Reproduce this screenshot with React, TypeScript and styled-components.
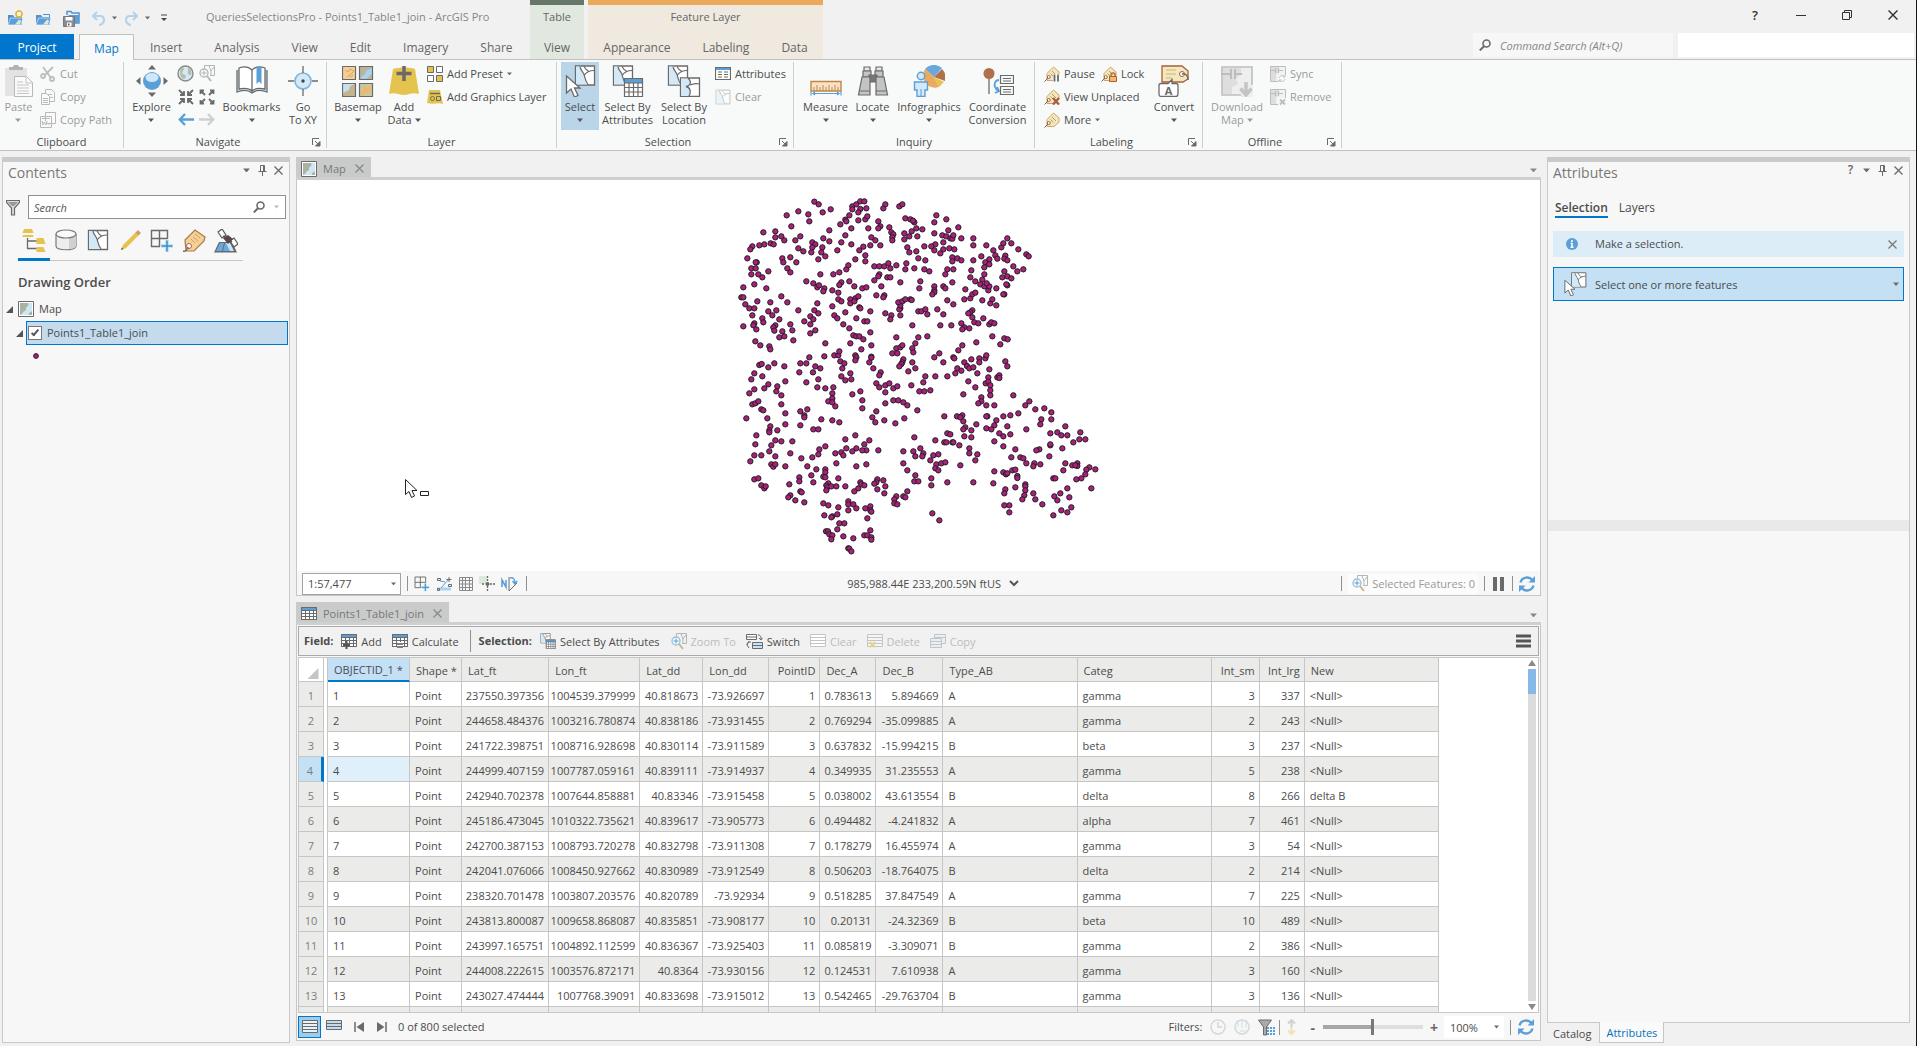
import React from 'react';
import styled, { createGlobalStyle, css } from 'styled-components';

const blue = '#0077c8';
const line = '#c6c6c6';
const ink = '#4c4c4c';
const muted = '#9b9b9b';

const Global = createGlobalStyle`
  *, *::before, *::after { box-sizing: border-box; }
  body { margin: 0; background: #f1f1f1; }
  body, button, input, select { font-family: "Open Sans", "Noto Sans", sans-serif; font-size: 11px; color: ${ink}; }
  button { border: 0; padding: 0; background: none; margin: 0; }
  svg { display: block; flex: none; }
`;

/* ---------- shell ---------- */

const Shell = styled.div`
  display: flex; flex-direction: column; height: 100vh; overflow: hidden;
  border-right: 1px solid #14141f; line-height: 14px;
`;
const Header = styled.header`display: flex; height: 59px; flex: none;`;
const HeaderLeft = styled.div`width: 530px; flex: none; display: flex; flex-direction: column;`;
const TitleRow = styled.div`height: 34px; flex: none; display: flex; align-items: center;`;
const QuickAccess = styled.div`display: flex; align-items: center; gap: 8px; padding-left: 7px; width: 206px; padding-top: 2px;`;
const QuickButton = styled.button<{ $w?: number }>`width: ${p => p.$w ?? 20}px; height: 20px; display: flex; align-items: center; gap: 6px;`;
const AppTitle = styled.h1`margin: 0; font-size: 11px; font-weight: 400; color: #868686; white-space: nowrap;`;
const TabRow = styled.nav`display: flex; height: 25px; align-items: stretch;`;
const RibbonTab = styled.button<{ $kind?: 'project' | 'active' }>`
  font-size: 12px; padding: 2px 16px 0; color: #666;
  ${p => p.$kind === 'project' && css`background: #0077cc; color: #fff; width: 74px; margin-right: 5px; padding: 2px 0 0;`}
  ${p => p.$kind === 'active' && css`
    background: #f8faf9; color: #0077cc; width: 55px; padding: 1px 0 0; margin-bottom: -1px;
    border: 1px solid #c0c0c0; border-bottom: 0; position: relative; z-index: 1;`}
`;
const ContextGroup = styled.div<{ $w: number; $bar: string; $bg: string }>`
  width: ${p => p.$w}px; flex: none; background: ${p => p.$bg}; border-top: 5px solid ${p => p.$bar};
  display: flex; flex-direction: column; justify-content: space-between; margin-right: 4px;
  & > span { text-align: center; color: #666; font-size: 11px; line-height: 24px; }
`;
const ContextTabs = styled(TabRow)`justify-content: center;`;
const HeaderRight = styled.div`flex: 1; display: flex; flex-direction: column; align-items: flex-end;`;
const WindowControls = styled.div`height: 33px; display: flex; padding-bottom: 3px;`;
const WindowButton = styled.button`width: 46px; display: grid; place-items: center; color: #333; font-weight: 600; font-size: 13px;`;
const CommandRow = styled.div`display: flex; gap: 5px; height: 24px; padding-right: 2px;`;
const CommandSearch = styled.label`width: 200px; background: #f7f7f7; display: flex; align-items: center; gap: 9px; padding-left: 6px;
  input { border: 0; background: none; padding: 0; width: 160px; font-style: italic; outline: 0; }
  input::placeholder { color: #868686; opacity: 1; }
`;
const UserBox = styled.div`width: 236px; background: #fff;`;

/* ---------- ribbon ---------- */

const Ribbon = styled.div`
  height: 92px; flex: none; display: flex; background: #f8faf9;
  border-top: 1px solid #c0c0c0; border-bottom: 1px solid #c0c0c0; padding: 2px 0;
`;
const Group = styled.section<{ $w: number; $pad?: number }>`
  width: ${p => p.$w}px; flex: none; border-right: 1px solid #cfcfcf; display: flex; flex-direction: column;
`;
const GroupBody = styled.div<{ $pad: number }>`height: 72px; flex: none; display: flex; padding-left: ${p => p.$pad}px;`;
const GroupFoot = styled.div`height: 16px; flex: none; display: flex; align-items: center;
  & > span { flex: 1; text-align: center; }
  & > button { margin-right: 5px; }
`;
const LargeButton = styled.button<{ $w: number; $active?: boolean; $off?: boolean }>`
  width: ${p => p.$w}px; height: 68px; flex: none; display: flex; flex-direction: column; align-items: center;
  padding-top: 3px; gap: 3px; line-height: 13px; white-space: nowrap;
  background: ${p => (p.$active ? '#bad4e8' : 'none')}; color: ${p => (p.$off ? muted : ink)};
`;
const LargeText = styled.span`display: flex; flex-direction: column; align-items: center;
  & > span { display: flex; align-items: center; gap: 3px; height: 13px; }
`;
const Stack = styled.div<{ $w?: number }>`display: flex; flex-direction: column; width: ${p => (p.$w ? p.$w + 'px' : 'auto')}; padding-left: 3px;`;
const SmallRow = styled.div`display: flex; gap: 6px;`;
const SmallButton = styled.button<{ $off?: boolean }>`
  height: 23px; display: flex; align-items: center; gap: 4px; white-space: nowrap; color: ${p => (p.$off ? muted : ink)};
`;
const NavGrid = styled.div`display: grid; grid-template-columns: 21px 21px; grid-auto-rows: 23px; width: 43px;
  button { display: grid; place-items: center; }
`;

/* ---------- panes ---------- */

const Main = styled.main`flex: 1; min-height: 0; display: flex; padding: 6px 6px 3px 2px;`;
const Pane = styled.section`background: #f7f7f7; border: 1px solid #c9c9c9; border-top: 5px solid #cacaca; display: flex; flex-direction: column; min-height: 0;`;
const ContentsPane = styled(Pane)`width: 288px; flex: none;`;
const PaneHeader = styled.div`height: 23px; flex: none; display: flex; align-items: flex-start; justify-content: space-between; padding: 1px 5px 0 5px;
  h2 { margin: 0; font-size: 14px; line-height: 19px; font-weight: 400; color: #777; }
`;
const PaneTools = styled.div`display: flex; align-items: center; gap: 5px;
  button { display: grid; place-items: center; width: 11px; height: 14px; font-size: 12px; line-height: 14px; font-weight: 600; color: #666; }
`;
const SearchRow = styled.div`display: flex; align-items: center; gap: 8px; padding: 10px 3px 0 3px;`;
const SearchBox = styled.label`flex: 1; height: 24px; border: 1px solid #919191; background: #fff; display: flex; align-items: center; gap: 9px; padding: 0 6px 0 5px;
  input { flex: 1; min-width: 0; border: 0; padding: 0; outline: 0; font-style: italic; }
  input::placeholder { color: #555; opacity: 1; }
`;
const ListTabs = styled.div`display: flex; margin: 8px 0 0 15px; width: 225px; border-bottom: 1px solid #c9c9c9; height: 34px;`;
const ListTab = styled.button<{ $active?: boolean }>`width: 32px; height: 34px; display: flex; justify-content: center; padding-top: 2px;
  border-bottom: 3px solid ${p => (p.$active ? blue : 'transparent')};
`;
const OrderTitle = styled.h3`margin: 12px 0 6px 15px; font-size: 13px; line-height: 18px; font-weight: 600;`;
const TreeRow = styled.div`height: 24px; display: flex; align-items: center; padding-left: 3px; gap: 5px;`;
const LayerRow = styled(TreeRow)`padding-left: 13px; gap: 3px;`;
const LayerItem = styled.label`flex: 1; height: 24px; background: #c3dbed; border: 1px solid ${blue}; display: flex; align-items: center; gap: 5px; padding-left: 1px; margin-right: 1px;`;
const Check = styled.input`appearance: none; margin: 0; width: 14px; height: 14px; background: #fff; border: 1px solid #777; display: grid; place-items: center;
  &:checked::after { content: ""; width: 4px; height: 8px; border: solid #555; border-width: 0 2px 2px 0; transform: rotate(40deg); margin-bottom: 2px; }
`;
const SymbolRow = styled.div`height: 22px; padding: 8px 0 0 30px;`;

const Center = styled.div`flex: 1; min-width: 0; margin: 0 6px 2px; display: flex; flex-direction: column;`;
const DocTabs = styled.div`height: 23px; flex: none; display: flex; justify-content: space-between; align-items: flex-end; border-bottom: 3px solid #cfcfcf; padding-right: 4px;
  & > svg { margin-bottom: 5px; }
`;
const DocTab = styled.div<{ $w: number }>`width: ${p => p.$w}px; height: 20px; background: #c9cbca; display: flex; align-items: center; gap: 6px; padding: 3px 7px 0 5px; color: #777;
  span { flex: 1; white-space: nowrap; }
`;
const MapView = styled.div`flex: 1; min-height: 0; background: #fff; border-left: 1px solid ${line}; border-right: 1px solid ${line}; display: flex; justify-content: center; position: relative; overflow: hidden;`;
const Pointer = styled.svg`position: absolute; left: 108px; top: 299px;`;
const MapBar = styled.div`height: 25px; flex: none; display: flex; align-items: center; justify-content: space-between; padding: 1px 5px 0 5px;
  background: #f7f7f7; border: 1px solid ${line}; border-top: 0;`;
const Cluster = styled.div<{ $gap?: number; $end?: number }>`display: flex; align-items: center; gap: ${p => p.$gap ?? 6}px; margin-right: ${p => p.$end ?? 0}px; white-space: nowrap;
  button { display: flex; align-items: center; gap: 4px; }
`;
const Rule = styled.i<{ $h?: number; $start?: number }>`width: 1px; height: ${p => p.$h ?? 15}px; margin-left: ${p => p.$start ?? 0}px; background: #8f8f94; flex: none;`;
const ScaleBox = styled.label`width: 99px; height: 22px; border: 1px solid #a3a3a3; background: #fff; display: flex; align-items: center; padding: 0 4px 0 5px;
  select { appearance: none; border: 0; background: none; padding: 0; flex: 1; min-width: 0; outline: 0; }
`;
const SelectedBox = styled.button`height: 20px; background: #fcfcfc; color: #999; padding: 0 3px;`;

const TablePane = styled.section`height: 439px; flex: none; margin-top: 6px; display: flex; flex-direction: column;`;
const TableBody = styled.div`flex: 1; min-height: 0; border: 1px solid ${line}; border-top: 0; padding: 1px 1px 0; display: flex; flex-direction: column; background: #f7f7f7;`;
const Toolbar = styled.div`height: 30px; flex: none; border: 1px solid #a9a9ad; background: #f1f1f1; display: flex; align-items: center; padding: 0 7px 0 5px;
  b { font-weight: 700; }
`;
const ToolButton = styled.button<{ $off?: boolean }>`display: flex; align-items: center; gap: 4px; margin-left: 10px; white-space: nowrap; color: ${p => (p.$off ? '#b9bdbd' : ink)};
  b + &, i + & { margin-left: 8px; }
`;
const Spring = styled.span`flex: 1;`;
const GridFrame = styled.div`flex: 1; min-height: 0; margin-top: 1px; border: 1px solid ${line}; background: #fff; display: flex; justify-content: space-between; overflow: hidden;`;
const Grid = styled.table`table-layout: fixed; border-collapse: separate; border-spacing: 0; width: 1140px; flex: none; align-self: flex-start;`;
const Col = styled.col<{ $w: number }>`width: ${p => p.$w}px;`;
const Head = styled.th<{ $selected?: boolean; $right?: boolean }>`
  height: 24px; padding: 2px 4px 0 6px; font-weight: 400; white-space: nowrap; background: #ebebe9;
  text-align: ${p => (p.$right ? 'right' : 'left')};
  border-right: 1px solid ${line}; border-bottom: 1px solid ${line};
  ${p => p.$selected && css`background: #c3e0f4; border-bottom: 2px solid ${blue}; color: #4c4c5c;`}
`;
const Corner = styled(Head)`background: #fff; padding: 0 1px 0 8px; svg { margin-top: 6px; }`;
const Cell = styled.td<{ $right?: boolean; $even?: boolean; $current?: boolean }>`
  height: 25px; padding: ${p => (p.$right ? '3px 4px 0 0' : '3px 0 0 5px')}; white-space: nowrap;
  text-align: ${p => (p.$right ? 'right' : 'left')};
  background: ${p => (p.$current ? '#dff0fa' : p.$even ? '#ebebe9' : '#fff')};
  border-right: 1px solid ${line}; border-bottom: 1px solid ${line};
`;
const RowNumber = styled.th<{ $current?: boolean }>`
  height: 25px; padding: 3px 0 0; font-weight: 400; color: #7d7d7d; background: ${p => (p.$current ? '#c3e0f4' : '#ebebe9')};
  border-right: ${p => (p.$current ? `3px solid ${blue}` : `1px solid ${line}`)}; border-bottom: 1px solid ${line};
`;
const Gap = styled.td`padding: 0; background: #fff; border-right: 1px solid ${line};`;
const Scroller = styled.div`width: 10px; flex: none; display: flex; flex-direction: column; align-items: center; padding: 2px 0 2px; margin-right: 1px; gap: 2px;`;
const Track = styled.div`flex: 1; width: 8px; background: #dcdcdc;`;
const Thumb = styled.div`height: 25px; background: #86b9e8;`;
const StatusBar = styled.div`height: 27px; flex: none; display: flex; align-items: center; padding-right: 5px; padding-top: 1px;`;
const ViewButton = styled.button<{ $active?: boolean }>`width: ${p => (p.$active ? 23 : 18)}px; height: 22px; display: grid; place-items: center;
  ${p => (p.$active ? css`background: #9fcbed; border: 1px solid ${blue};` : css`margin-left: 4px;`)}
`;
const StatusButton = styled.button`margin-left: 11px;`;
const Slider = styled.input`appearance: none; width: 100px; height: 12px; margin: 0 7px 0 8px; background: linear-gradient(90deg, #a6a6a6 50%, #dedede 50%) center / 100% 4px no-repeat;
  &::-webkit-slider-thumb { appearance: none; width: 3px; height: 16px; background: #777; }
`;
const ZoomPick = styled.label`width: 60px; height: 22px; background: #fff; display: flex; align-items: center; padding: 0 5px 0 6px; margin: 0 6px;
  select { appearance: none; border: 0; background: none; padding: 0; flex: 1; min-width: 0; outline: 0; }
`;
const Symbol = styled.button`font-size: 14px; font-weight: 700; color: #666;`;

const RightColumn = styled.div`width: 363px; flex: none; display: flex; flex-direction: column;`;
const AttributesPane = styled(Pane)`flex: 1;`;
const AttrTabs = styled.div`display: flex; gap: 11px; padding: 14px 0 0 7px;`;
const AttrTab = styled.button<{ $active?: boolean }>`height: 19px; padding-bottom: 2px; font-size: 12px; font-weight: ${p => (p.$active ? 600 : 400)};
  border-bottom: 2px solid ${p => (p.$active ? blue : 'transparent')};`;
const Message = styled.div`height: 26px; margin: 13px 5px 0; background: #dcedf8; display: flex; align-items: center; padding: 0 7px 0 13px; gap: 17px;
  span { flex: 1; }
`;
const SelectButton = styled.button`height: 34px; margin: 10px 5px 0; border: 1px solid ${blue}; background: #c3e0f4; display: flex; align-items: center; padding: 0 4px 0 9px; gap: 8px;
  span { flex: 1; text-align: left; }
`;
const Splitter = styled.div`height: 11px; background: #e9e9e9; margin-top: 219px;`;
const DockTabs = styled.div`height: 20px; display: flex; flex: none; padding-left: 6px; gap: 8px;`;
const DockTab = styled.button<{ $active?: boolean }>`
  padding-top: 1px;
  ${p => p.$active && css`color: #0072bc; background: #fafafa; border: 1px solid ${line}; border-top: 0; margin-top: -1px; padding: 1px 6px 0;`}
`;

/* ---------- icons ---------- */

const g = '#6a6a6a';
const sky = '#5b9fd9';
const pale = '#d3e9f7';
const gold = '#e5c34f';

const Caret = ({ c = g, w = 6 }: { c?: string; w?: number }) => (
  <svg width={w} height={w / 2 + 1} viewBox="0 0 6 4"><path d="M0 .5h6L3 4z" fill={c} /></svg>
);
const Close = ({ s = 9, c = g }: { s?: number; c?: string }) => (
  <svg width={s} height={s} viewBox="0 0 9 9"><path d="M.5.5l8 8M8.500.5l-8 8" stroke={c} strokeWidth="1.300" /></svg>
);
const Pin = () => <svg width="9" height="11" viewBox="0 0 9 11" fill="none" stroke={g}><path d="M2.500 6V.5h4V6M5.500 1v5M.5 6.500h8M4.500 7v4" /></svg>;
const Lens = ({ c = g }: { c?: string }) => (
  <svg width="12" height="12" viewBox="0 0 12 12" fill="none" stroke={c}><circle cx="7.500" cy="4.500" r="3.500" strokeWidth="1.600" /><path d="M5 7.200L.8 11.400" strokeWidth="2" /></svg>
);
const Launcher = () => <svg width="9" height="9" viewBox="0 0 9 9"><path d="M.5 7V.5H7" fill="none" stroke={g} /><path d="M3 3l4 4M8 3.500V8H3.500z" stroke={g} fill={g} /></svg>;
const FolderIcon = ({ children }: { children?: React.ReactNode }) => (
  <svg width="17" height="17" viewBox="0 0 17 17">
    <path d="M1 15V5h5l1.500 2H15v8z" fill="#4f93cf" /><path d="M1 15l2.500-7H16l-2 7z" fill="#5b9fd9" stroke="#fff" strokeWidth=".6" />
    <path d="M8 14.500l4-5 2 1-1 4z" fill="#dfe7dc" />{children}
  </svg>
);
const NewIcon = () => <FolderIcon><circle cx="12" cy="4" r="3" fill="#fff7d0" stroke="#e0b440" strokeWidth="1.500" /><path d="M12 0v8M8 4h8" stroke="#e0b440" strokeDasharray="1.500 5" /></FolderIcon>;
const OpenIcon = () => <FolderIcon><path d="M8 4.500h6.500V8" fill="none" stroke="#4f93cf" /></FolderIcon>;
const SaveIcon = () => (
  <svg width="17" height="17" viewBox="0 0 17 17"><path d="M4 5V1.500h4l1 1.500h7v10h-5" fill="none" stroke="#4f93cf" strokeWidth="1.500" /><path d="M5 5h11v8h-5z" fill="#5b9fd9" />
    <path d="M.5 6.500h11v10H.5z" fill="#8a8a92" stroke="#77777f" /><path d="M2.500 7h7v3.500h-7zM4 12.500h4.500v4H4z" fill="#fff" /><path d="M5 13.500h1.500v2H5z" fill="#555" /></svg>
);
const Undo = ({ flip }: { flip?: boolean }) => (
  <svg width="15" height="15" viewBox="0 0 15 15" fill="none" stroke="#b5d2ea" strokeWidth="2.200">
    <g transform={flip ? 'matrix(-1 0 0 1 15 0)' : undefined}><path d="M6 1L2 5l4 4M2 5h7c3 0 4 2 4 4s-2 5-5 5" /></g>
  </svg>
);
const PasteIcon = () => (
  <svg width="30" height="32" viewBox="0 0 30 32"><path d="M1 3h22v28H1z" fill="#e3e3e3" /><path d="M5 5V2h4c0-3 6-3 6 0h4v3z" fill="#b3b3b3" />
    <path d="M10.500 11.500h12l6 6v14h-18z" fill="#fafafa" stroke="#b9b9b9" /><path d="M22 12v6h6M13 20h12M13 23h12M13 26h12M13 28.500h12M13 17h6" fill="none" stroke="#c5c5c5" /></svg>
);
const CutIcon = () => <svg width="16" height="16" viewBox="0 0 16 16" fill="none" stroke="#bdbdbd" strokeWidth="1.800"><path d="M3 1l8 11M13 1L5 9" /><circle cx="3" cy="10" r="2" /><circle cx="12" cy="13" r="2" /></svg>;
const CopyIcon = ({ c = '#b9b9b9', f = '#fafafa' }: { c?: string; f?: string }) => (
  <svg width="16" height="16" viewBox="0 0 16 16" fill={f} stroke={c}><path d="M5.500.5h6l3 3v9h-9z" /><path d="M1.500 4.500h5l3 3v8h-8z" /><path d="M3 9.500h5M3 11.500h5M3 13.500h5M8 5.500h4M10 8.500h3" /></svg>
);
const CopyPathIcon = () => <svg width="16" height="16" viewBox="0 0 16 16" fill="#fafafa" stroke="#b9b9b9"><path d="M5.500.5h10v11h-10zM.5 4.500h11v11H.5z" /><path d="M2 9l1 4 1.500-3L6 13l1-4M8.500 13h1M2 6.500h8" /></svg>;
const ExploreIcon = () => (
  <svg width="32" height="32" viewBox="0 0 32 32"><circle cx="16" cy="16" r="9" fill={sky} /><ellipse cx="16" cy="12.500" rx="6.500" ry="4.500" fill="#cfe7f8" />
    <path d="M12 4.500L16 0l4 4.500zM12 27.500l4 4.500 4-4.500zM4.500 12L0 16l4.500 4zM27.500 12l4.500 4-4.500 4z" fill={g} /></svg>
);
const GlobeIcon = () => <svg width="17" height="17" viewBox="0 0 17 17"><circle cx="8.500" cy="8.500" r="7.500" fill={pale} stroke="#888" strokeWidth="1.400" /><path d="M4 3c3-1 4 1 2 3s0 3 2 4 0 4-1 4C3 13 2 7 4 3zM11 3c3 1 4 4 3 7-2 1-4-2-3-4z" fill="#b8bda4" /></svg>;
const ZoomSelIcon = ({ off }: { off?: boolean }) => (
  <svg width="17" height="17" viewBox="0 0 17 17" fill="none" stroke="#b5b5b5"><path d="M6.500 3V.5h10v10H12M11 1l2 5 3-4M13 6v4" /><circle cx="6" cy="8" r="4" fill="#f8faf9" stroke={off ? '#b5b5b5' : '#93bfe0'} strokeWidth="1.300" /><path d="M3.500 8h5M6 5.500v5" stroke={off ? '#b5b5b5' : '#5b9fd9'} /><path d="M9 11l4 5" stroke={off ? '#b5b5b5' : '#c9b58c'} strokeWidth="2" /></svg>
);
const ArrowsIcon = ({ out }: { out?: boolean }) => (
  <svg width="16" height="16" viewBox="0 0 16 16" fill="none" stroke={g} strokeWidth="1.800">
    {out ? <path d="M1.500 5V1.500H5M1.500 1.500L6 6M11 1.500h3.500V5M14.500 1.500L10 6M1.500 11v3.500H5M1.500 14.500L6 10M11 14.500h3.500V11M14.500 14.500L10 10" />
      : <path d="M6 2v4H2M6 6L1 1M10 2v4h4M10 6l5-5M6 14v-4H2M6 10l-5 5M10 14v-4h4M10 10l5 5" />}
  </svg>
);
const BackIcon = ({ c, flip }: { c: string; flip?: boolean }) => (
  <svg width="16" height="13" viewBox="0 0 16 13" fill="none" stroke={c} strokeWidth="2.400"><g transform={flip ? 'matrix(-1 0 0 1 16 0)' : undefined}><path d="M7 1L1.800 6.500 7 12M2 6.500h14" /></g></svg>
);
const BookIcon = () => (
  <svg width="32" height="32" viewBox="0 0 32 32"><path d="M1 5v22c5-2 11-2 15 1 4-3 10-3 15-1V5" fill="#c5e2f5" stroke={g} strokeWidth="1.300" /><path d="M3 3c5-2 10-1 13 2v21c-3-3-8-3-13-2zM29 3c-5-2-10-1-13 2v21c3-3 8-3 13-2z" fill="#fff" stroke={g} strokeWidth="1.300" /><path d="M20.500 2h5v17L23 16.500 20.500 19z" fill={sky} /></svg>
);
const GoToIcon = () => <svg width="32" height="32" viewBox="0 0 32 32" fill="none" stroke={g}><circle cx="16" cy="16" r="8" fill={pale} stroke="#7db4e0" strokeWidth="1.600" /><path d="M16 1v7M16 24v7M1 16h6M25 16h6" strokeWidth="1.300" /><circle cx="16" cy="16" r="1.700" fill="#444" stroke="none" /></svg>;
const BasemapIcon = () => (
  <svg width="32" height="32" viewBox="0 0 32 32"><path d="M.5 1.500h13v13H.5z" fill="#f3cf96" /><path d="M17.500 1.500h13v13h-13z" fill="#b7b69c" /><path d="M.5 18.500h13v13H.5z" fill="#c8dff0" /><path d="M17.500 18.500h13v13h-13z" fill="#c8c8a6" />
    <path d="M18 13l5-4 1-3 6-3v6l-6 5z" fill="#a9d2f0" /><path d="M1 28l6-3 1-4 5-2v12H1z" fill="#c2b48f" /><path d="M21 20l4 3 5-2-2 6-4 1-4 3-1-4 3-3z" fill="#f0b665" /><path d="M3 5l3 2 2-3 4 2-3 3-4 3M8 12l3-2" fill="none" stroke="#d9a55a" />
    <g fill="none" stroke={g} strokeWidth="1.200"><path d="M.5 1.500h13v13H.5zM17.500 1.500h13v13h-13zM.5 18.500h13v13H.5zM17.500 18.500h13v13h-13z" /></g></svg>
);
const AddDataIcon = () => <svg width="32" height="32" viewBox="0 0 32 32"><path d="M5 4c7-2 16-2 22 0l4 25c-7-2-10 1-15 1S6 27 1 29z" fill={gold} /><path d="M16 1v15M8.500 8.500h15" stroke={g} strokeWidth="3.500" /></svg>;
const PresetIcon = () => <svg width="16" height="16" viewBox="0 0 16 16" stroke={g} fill="#fff"><path d="M.5.500h6v6h-6z" fill={gold} /><path d="M9.500.5h6v6h-6zM.5 9.500h6v6h-6z" /><path d="M9.500 9.500h6v6h-6z" fill={gold} /></svg>;
const GraphicsIcon = () => <svg width="16" height="16" viewBox="0 0 16 16"><path d="M2 1h11l3 14c-5-2-9 1-16-1z" fill={gold} /><path d="M3 4.500h10" stroke={g} strokeWidth="1.500" /><circle cx="5.500" cy="9.500" r="2" fill="none" stroke={g} /><path d="M9.500 7.500h4v4h-4z" fill="none" stroke={g} /></svg>;
const polygonMap = <><path d="M.5.5h19v19H.5z" fill="#fff" stroke={g} strokeWidth="1.300" /><path d="M1 1h5l6 18H1z" fill={pale} /><path d="M5 1c0 3 3 5 4 8s1 6 4 10M9 10c2-3 6-5 10-5M14 6c-3-1-4-3-5-5" fill="none" stroke={g} strokeWidth="1.200" /></>;
const SelectIcon = ({ w = 32 }: { w?: number }) => (
  <svg width={w} height={w} viewBox="0 0 32 32"><g transform="translate(11 .5)">{polygonMap}</g><path d="M2.500 11v17l4.500-4 3.500 8 3.500-1.500L10.500 23H16z" fill="#fff" stroke={g} strokeWidth="1.300" /></svg>
);
const SelectAttrIcon = ({ w = 32 }: { w?: number }) => (
  <svg width={w} height={w} viewBox="0 0 32 32"><g transform="translate(1 .5)">{polygonMap}</g><path d="M12.500 13.500h18v18h-18z" fill="#fff" stroke={g} /><path d="M12.500 13.500h18V18h-18z" fill={sky} /><path d="M12.500 18h18M12.500 22.500h18M12.500 27h18M17 18v13M21.500 18v13M26 18v13M12.500 13.500h18v18h-18z" fill="none" stroke={g} strokeWidth="1.200" /></svg>
);
const SelectLocIcon = () => <svg width="34" height="32" viewBox="0 0 34 32"><g transform="translate(1 .5)">{polygonMap}</g><path d="M13.500 13h19v18.500h-19z" fill="#fff" stroke={g} strokeWidth="1.300" /><path d="M14 13.500h7c4 4 1 8-2 8 4 2 5 5 3 9.500h-8z" fill={pale} /><path d="M21 13c5 5 1 8-2 8.500 5 1 5 6 3 10M23 20c3-1 6-2 9-1" fill="none" stroke={g} strokeWidth="1.300" /></svg>;
const TableIcon = ({ w = 16, off, mark }: { w?: number; off?: boolean; mark?: React.ReactNode }) => (
  <svg width={w} height={w} viewBox="0 0 16 16" opacity={off ? 0.4 : 1}><path d="M.5 1.500h15v12H.5z" fill="#fff" stroke={g} /><path d="M.5 1.500h15v3H.5z" fill={sky} /><path d="M.5 4.500h15M.5 7.500h15M.5 10.500h15M4.500 4.500v9M8.500 4.500v9M12.500 4.500v9M.5 1.500h15v12H.5z" fill="none" stroke={g} />{mark}</svg>
);
const AttributesIcon = () => <svg width="16" height="16" viewBox="0 0 16 16" fill="none" stroke={g}><path d="M.5 1.500h15v12H.5z" fill="#fff" strokeWidth="1.200" /><path d="M1 2h14v2H1z" fill={sky} stroke="none" /><path d="M3 6h4M3 8.500h4M3 11h4M9 6h4M9 8.500h4M9 11h4" /></svg>;
const PolyIcon = ({ w = 16, off }: { w?: number; off?: boolean }) => <svg width={w} height={w} viewBox="-1 -1 22 22" opacity={off ? 0.4 : 1}>{polygonMap}</svg>;
const MeasureIcon = () => <svg width="32" height="32" viewBox="0 0 32 32" fill="none"><path d="M1 16.500h30v9.500H1z" fill="#f8e3c4" stroke="#c08548" strokeWidth="1.400" /><path d="M4 22v4M7 20v6M10 22v4M13 20v6M16 22v4M19 20v6M22 22v4M25 20v6M28 22v4" stroke="#c08548" /><path d="M1 26.500v4M31 26.500v4M3 28.500h26M5 27l-2 1.500L5 30M27 27l2 1.500-2 1.500" stroke={sky} strokeWidth="1.200" /></svg>;
const LocateIcon = () => <svg width="32" height="32" viewBox="0 0 32 32" stroke={g} strokeWidth="1.200" fill="#c4c4c4"><path d="M7 2h6v4H7zM19 2h6v4h-6z" fill="#e6e6e6" /><path d="M6 6h8v6h-8zM18 6h8v6h-8z" /><path d="M12 10h8v7h-8z" fill="#777" /><path d="M5 12h8v18H1.500zM19 12h8l3.500 18H19z" /><path d="M2 26h11M19 26h11" /></svg>;
const InfoIcon = () => (
  <svg width="32" height="32" viewBox="0 0 32 32"><path d="M21 12L12 4a12 12 0 0 1 17-1z" fill="#6aa7dc" /><path d="M21 12l8-8a12 12 0 0 1 3 12z" fill="#b0704a" /><path d="M21 12l10 5-5 5z" fill={gold} /><path d="M21 12L12 4a12 12 0 0 0 14 18z" fill="#ecaa5c" />
    <circle cx="8" cy="11" r="3.700" fill={pale} stroke={sky} strokeWidth="1.400" /><path d="M1.500 17h13v8H12v6.500H4V25H1.500z" fill={pale} stroke={sky} strokeWidth="1.400" /><path d="M8 24v7" stroke={sky} /></svg>
);
const CoordIcon = () => <svg width="32" height="32" viewBox="0 0 32 32" fill="none" stroke={g}><path d="M7 13v16" strokeWidth="1.300" /><circle cx="7" cy="8.500" r="5.500" fill="#b0704a" stroke="none" /><path d="M18.500 10.500h13v8h-13zM18.500 21.500h13v8h-13z" strokeWidth="1.200" /><path d="M21 13.500h8M21 16h8M21 24.500h8M21 27h8" /><path d="M17 15c-4 0-5 4-4 7s2 3 4 4M13 28l4-2-2-4" stroke={sky} strokeWidth="1.800" /></svg>;
const TagIcon = ({ children, w = 16 }: { children?: React.ReactNode; w?: number }) => (
  <svg width={w} height={w} viewBox="0 0 16 16"><path d="M3 7.500L9.500 1 15 6v4l-5 4.500H3z" fill="#f3e8bd" stroke="#d0a562" /><path d="M8 5l4 4M6.500 7.500l3 3" stroke="#b99a5a" /><circle cx="4.800" cy="11" r="1.500" fill="#fff" stroke="#a56a45" /><path d="M.5 15.500L4 12" stroke={g} />{children}</svg>
);
const PauseTag = () => <TagIcon><path d="M9 8h7v8H9z" fill="#f8faf9" /><path d="M10.500 8.500v7M14 8.500v7" stroke={g} strokeWidth="1.800" /></TagIcon>;
const LockTag = () => <TagIcon><path d="M8.500 10.500h7v5h-7z" fill="#f1bb6c" stroke="#a85f3a" /><path d="M10 10.500V8.700c0-2.500 4-2.500 4 0v1.800" fill="none" stroke="#a85f3a" strokeWidth="1.300" /></TagIcon>;
const UnplacedTag = () => <TagIcon><path d="M9 9l6 6.500M15 9l-6 6.500" stroke="#a85f3a" strokeWidth="2.400" /></TagIcon>;
const ConvertIcon = () => (
  <svg width="32" height="32" viewBox="0 0 32 32"><path d="M4 1h20l6 5v8l-5 3H4z" fill="#f3e8bd" stroke="#a85f3a" strokeWidth="1.300" /><path d="M8 5h10M8 9h10M8 13h6" stroke="#c9b67e" /><circle cx="24" cy="9" r="2.500" fill="#fff" stroke="#a85f3a" /><path d="M24 9c4-1 6 2 6 6" fill="none" stroke={g} strokeWidth="1.500" />
    <path d="M3 18.500h7l4-4v4h4c1.500 0 2 .5 2 2v8c0 2-.5 3-2 3H3c-1.500 0-2-1-2-3v-8c0-1.500.5-2 2-2z" fill="#fff" stroke={g} strokeWidth="1.300" /><text x="10.500" y="29.500" textAnchor="middle" fontFamily="Open Sans" fontWeight="700" fontSize="11" fill={g}>A</text></svg>
);
const OfflineIcon = () => (
  <svg width="32" height="32" viewBox="0 0 32 32"><path d="M1 2h30v28H1z" fill="#eee" stroke="#bdbdbd" strokeWidth="1.600" /><path d="M2 3h18v6l-5 5 2 5-6 3v7H2z" fill="#dedede" /><path d="M0 9h10M10 4v10M14 4v10M14 9h7" stroke="#bdbdbd" strokeWidth="2" fill="none" /><path d="M20 20h12v12H20z" fill="#eee" /><path d="M25 17v12M19.500 23.500L25 30l5.500-6.500" fill="none" stroke="#c4c4c4" strokeWidth="3.500" /></svg>
);
const OfflineSmall = ({ children }: { children: React.ReactNode }) => (
  <svg width="16" height="16" viewBox="0 0 16 16" fill="none" stroke="#bdbdbd"><path d="M.5.5h15v15H.5z" fill="#f2f2f2" /><path d="M1 1h8v5L6 9v6H1z" fill="#dedede" stroke="none" /><path d="M0 4.500h5M5.500 2v5M8.500 2v5M9 4.500h4" strokeWidth="1.200" /><path d="M8 9h8v7H8z" fill="#f8faf9" stroke="none" />{children}</svg>
);
const SyncSmall = () => <OfflineSmall><path d="M9 12c1-3 4-3 5.500-1.500M15 9v2h-2.500M15 13c-1 3-4 3-5.500 1.500M9 16v-2h2.500" /></OfflineSmall>;
const RemoveSmall = () => <OfflineSmall><path d="M10 10.500l5 5M15 10.500l-5 5" strokeWidth="2" /></OfflineSmall>;
const FunnelIcon = () => <svg width="14" height="17" viewBox="0 0 14 17"><path d="M.5 1.500h13v2L8.500 9v7h-3V9l-5-5.500z" fill="#ddd" stroke={g} strokeWidth="1.200" /><path d="M2 3h10L8 7H6z" fill="#999" /></svg>;
const OrderIcon = () => <svg width="24" height="23" viewBox="0 0 24 23"><path d="M2 0h8l1.500 4h-11zM1 6h10l.5 2H.5zM14.500 9h7l2 6h-9zM14.500 18h7l2 5h-9z" fill={gold} /><path d="M5.500 9v10.500h9M5.500 12h9" fill="none" stroke={g} strokeWidth="1.300" /></svg>;
const CylinderIcon = () => <svg width="22" height="22" viewBox="0 0 22 22" stroke="#7b7b7b" strokeWidth="1.200"><path d="M1 5v12c0 5 20 5 20 0V5" fill="#eee" /><path d="M14 8v12c4 0 7-2 7-3V5z" fill="#cfd3d0" stroke="none" /><ellipse cx="11" cy="5" rx="10" ry="4" fill="#fafafa" /></svg>;
const PencilIcon = () => <svg width="21" height="22" viewBox="0 0 21 22"><path d="M1 21l2-5L16 3l3 3L6 19z" fill={gold} /><path d="M15.500 3.500L18 1l3 3-2.500 2.500z" fill="#d19a7a" /><path d="M1 21l1-2.500L3.500 20z" fill="#555" /></svg>;
const GridPlusIcon = ({ w = 24 }: { w?: number }) => <svg width={w} height={w} viewBox="0 0 24 24" fill="none"><path d="M10 17.500H1.500v-16h16V10M9.500 1.500v16M1.500 9.500h16" stroke={g} strokeWidth="1.400" /><path d="M17 11v12M11 17h12" stroke="#c4e6f9" strokeWidth="4" /><path d="M17 11.500v11M11.500 17h11" stroke="#3c8cc4" strokeWidth="1.500" /></svg>;
const LabelIcon = () => <svg width="23" height="23" viewBox="0 0 23 23"><path d="M2 11L12 1l10 7-1 4-10 10H3z" fill="#f6cf95" stroke="#a97a4c" strokeWidth="1.200" /><path d="M12 5l5 4M10 8l5 4M8 10l4 4" stroke="#cda266" /><circle cx="6" cy="17" r="2.500" fill="#fff" stroke="#a56a45" /><path d="M0 22c2 1 4-1 5-4" fill="none" stroke={g} strokeWidth="1.400" /></svg>;
const SatelliteIcon = () => <svg width="24" height="24" viewBox="0 0 24 24"><path d="M5 13h13l5 10.500H0z" fill={g} /><path d="M6 14h4L8 22H2zM11 14h4l1 8H9z" fill="#67aae2" /><path d="M12 14h4l4 8h-4z" fill="#cbe4f7" /><path d="M4 3l4-3 4 6-4 3zM16 12l4-3 4 6-4 3zM9 7l9 6" fill="#fff" stroke="#555" strokeWidth="1.200" /><path d="M9 9l5-3 5 4-5 5z" fill="#5a4646" /></svg>;
const MapIcon = () => <svg width="16" height="16" viewBox="0 0 16 16"><path d="M.5.5h15v15H.5z" fill="#fff" stroke={g} /><path d="M2 2h12v12H2z" fill="#cfe7f5" /><path d="M2 2h8c2 3-3 4-2 6s-4 2-3 4l-3 2zM11 14c-1-2 2-3 3-4v4z" fill="#a9b3a0" /></svg>;
const Twist = () => <svg width="7" height="7" viewBox="0 0 7 7"><path d="M7 0v7H0z" fill="#555" /></svg>;
const GridIcon = () => <svg width="14" height="14" viewBox="0 0 14 14"><path d="M.5.5h13v13H.5zM3.500 0v14M6.500 0v14M10.500 0v14M0 3.500h14M0 7h14M0 10.500h14" fill="none" stroke="#8a8a8a" /></svg>;
const SnapIcon = () => <svg width="17" height="16" viewBox="0 0 17 16" fill="none" stroke={g}><path d="M1 13h14" stroke="#a8d4f0" strokeWidth="3" /><path d="M1.500 2.500h3v2h-3zM13 1v5M10.500 3.500h5M12.500 8.500h3v2h-3zM1.500 12.500h2v2h-2z" /><path d="M4 5l5 1M5 12l7-8" stroke={sky} /></svg>;
const CrossIcon = () => <svg width="16" height="16" viewBox="0 0 16 16"><path d="M0 0h8v8H0z" fill="#dfe8df" /><path d="M8.500 0v5M8.500 10v6M3 8h3M11 8h5" stroke={g} strokeWidth="1.300" strokeDasharray="2 1" /><circle cx="8.500" cy="8" r="2" fill={g} /></svg>;
const NorthIcon = () => <svg width="17" height="16" viewBox="0 0 17 16" fill="none"><path d="M1 11V4l4 7V4" stroke={sky} strokeWidth="1.600" /><path d="M8 1v14l8-8" stroke={g} /><path d="M9 2c3-1 5 1 5 5M11.500 5L14 8l2-3" stroke={sky} strokeWidth="1.400" /></svg>;
const RefreshIcon = () => <svg width="16" height="16" viewBox="0 0 16 16" fill="none" stroke={sky} strokeWidth="2.400"><path d="M1.500 6.500C3 1 10 0 13.500 4M14.500 9.500C13 15 6 16 2.500 12" /><path d="M16 0v6.500H9.500zM0 16V9.500h6.500z" fill={sky} stroke="none" /></svg>;
const SwitchIcon = () => <svg width="17" height="17" viewBox="0 0 17 17" stroke={g} fill="#fff"><path d="M.5 1.500h10v5H.5zM.5 4h10" /><path d="M6.500 9.500h10v6h-10zM6.500 12.500h10" fill="#c9e4f6" /><path d="M12 2c3 0 3 2 3 5M13 5l2 2 1.500-2M1 12c0-2 1-3 4-3M3 8L1 12l2 3" fill="none" /></svg>;
const RowsIcon = ({ c = g, f = '#fff', mark }: { c?: string; f?: string; mark?: React.ReactNode }) => <svg width="16" height="14" viewBox="0 0 16 14"><path d="M.5.5h15v12H.5zM.5 3.500h15M.5 6.500h15M.5 9.500h15" fill={f} stroke={c} />{mark}</svg>;
const InfoDot = () => <svg width="12" height="12" viewBox="0 0 12 12"><circle cx="6" cy="6" r="6" fill={sky} /><path d="M6 2v2M6 5v4M4.500 9.200h3M4.800 5.200H6" stroke="#fff" strokeWidth="1.500" /></svg>;

/* ---------- map features ---------- */

const north = `283,65 296,73 332,88 308,97 235,94 265,103 200,106 268,124 214,139 130,157 166,154 166,172 184,169 193,181 241,169 226,181 328,151 361,133 376,119 379,124 388,106 397,79 397,88 409,73 421,64 433,64 439,85 421,87 415,97 415,121 436,118 442,109 445,145 394,145 475,124 481,139 475,145 376,166 310,175 328,184 364,187 394,193 352,211 454,172 466,181 451,196 430,200 481,196 418,211 490,85 496,73 538,79 547,73 556,115 571,118 583,127 579,122 589,145 607,148 592,169 575,154 568,169 553,160 553,178 508,142 514,157 520,163 517,172 517,181 562,202 568,217 589,214 613,199 643,160 643,127 649,106 679,118 715,142 685,151 667,166 679,169 691,175 697,176 700,166 724,175 760,175 760,196 799,196 670,187 646,193 634,199 643,211 661,220 670,208 688,205 703,208 595,235 616,241 697,232 697,244 712,235 724,241 760,241 784,229 820,211 826,226 832,236 844,202 850,190 862,175 874,190 895,208 919,223 926,229 856,227 853,236 862,241 880,259 910,268 892,274 853,274 847,292 862,289 874,295 862,316 859,313 853,343 850,343 829,325 808,238 796,247 808,253 793,262 754,271 751,292 793,283 787,299 766,304 781,313 793,319 805,331 808,319 800,310
277,187 286,193 277,202 274,217 307,202 304,217 316,229 295,238 235,205 250,214 229,247 211,232 187,235 190,247 202,265 211,277 97,199 91,208 118,196 133,193 152,190 161,193 82,235 110,247 107,247 94,265 107,265 94,283 115,283 127,292 145,274 103,313 139,325 70,322 64,352 70,352 76,373 88,385 103,385 112,364 151,367 184,349 202,367 97,406 145,394 169,391 157,406 127,415 130,427 178,418 103,430 100,436 109,448 70,439 166,436 160,442 163,452 187,454 178,472 193,469 211,433 217,451 220,481 106,484 121,496 148,499 151,508 235,391 253,424 271,409 280,418 271,433 283,391 295,400 292,370 286,451 271,460 316,490 337,379 343,406 352,415 370,433 388,445 376,397 259,304 280,310 292,322 297,316 313,325 310,334 301,283 340,283 358,277 379,268 385,256 406,238 436,226 436,244 364,307 358,315 388,304 403,319 427,325 439,322 337,331 355,338 355,358 364,364 391,358 391,370 406,355 415,349 403,364 418,382 421,385 409,415 433,424 442,424 451,394 451,457 400,466 409,469 418,469 430,478 391,490 454,496 424,508 463,259 478,259 493,259 505,250 511,265 529,256 559,250 556,268 583,265 613,268 628,274 478,283 475,289 463,301 502,292 511,292 484,319 541,307 469,346 493,346 490,352 601,304 598,325 496,400 514,406 511,418 541,406 541,385 538,388 541,376 535,367 547,364 556,358 571,358 575,360 595,394 604,394 616,388 622,403 577,436 529,472 595,472 622,469 586,490 577,505 580,517 529,505 541,502 547,496 517,520 532,520 682,268 700,268 676,283 697,307 643,319 670,319 676,325 643,331 643,337 637,343 682,361 700,373 652,388 670,403 661,436 694,436 736,328 733,358 751,355 757,343 766,338 787,361 811,370 817,358 829,376 757,391 751,397 745,400 757,412 763,427 775,430 790,415 724,430 733,442 727,448 748,445 808,433 814,427 823,430 817,469 853,475 863,478 841,493 769,487 727,496 715,511 643,532 658,520 670,547 700,532 703,535
118,555 125,552 145,562 163,550 193,559 241,550 259,550 268,532 313,529 286,559 301,565 343,526 355,526 358,514 361,544 373,550 367,565 406,526 409,532 406,541 454,530 454,533 448,547 460,565 550,538 547,547 544,552 538,559 577,547 586,565 733,547 754,538 778,535 778,547 796,535 799,526 741,558 748,565 760,562 712,565 808,568 856,544 862,559`;
const south = `103,10 127,19 94,28 145,43 133,55 172,49 169,64 184,76 103,58 88,70 196,34 97,103 106,100 115,94 184,103 124,118 130,121 142,145 79,145 196,130 196,163 151,169 148,181 148,187 172,181 109,196 106,223 166,211 184,214 217,214 154,226 148,244 103,256 124,256 166,259 91,274 154,283 160,290 166,283 196,289 211,250 103,328 115,325 124,346 133,355 137,349 238,7 279,7 295,28 259,37 292,52 316,55 340,52 337,70 337,85 325,94 337,97 346,109 364,19 376,31 391,10 394,28 397,73 421,64 427,91 427,115 241,124 262,118 253,136 253,142 241,166 304,148 337,151 358,157 280,178 295,178 469,124 457,142 466,157 493,151 526,160 553,145 469,40 478,52 496,46 508,40 520,55 532,49 496,67 482,7 478,16 565,4 574,46 610,37 616,19 646,19 682,19 598,64 613,64 631,61 496,100 520,91 535,91 550,97 562,106 592,121 583,202 673,139 711,139 727,136 721,142 730,154 736,172 730,178 754,181 733,199 754,202 769,163 682,190 691,193 646,211 673,217 679,217 697,217 700,217 718,226 748,235 748,250 772,253 766,271 721,286 682,337 760,337 706,10 724,2 745,34 766,52 772,10 805,22 797,40 805,35 811,46 811,61 811,76 832,22 838,16 838,24 730,73 784,82 784,94 775,100 799,106 823,106 880,76 928,94 916,106 946,118 973,115 994,127 994,148 964,148 961,163 895,130 871,136 850,139 802,139 799,139 829,151 823,166 799,175 814,178 862,169 838,190 850,199 871,193 823,214 850,229 919,178 991,190 1012,187 1024,196 1042,196 1036,169 1081,187 1078,208 1096,208 1060,217 1027,235 991,226 991,223 988,259 958,238 949,241 886,238 874,262 901,262 910,265 919,280 943,280 940,289 961,283 823,304 820,340 850,307 858,313 862,310 877,301 886,299 892,318 892,324 886,352 856,358 853,370 853,406 868,406 868,427 916,343 916,349 916,361 913,376 907,388 940,370 946,388 967,403 1000,325 1006,325 1030,301 1036,280 1057,286 1072,280 1072,288 1066,286 1108,292 1126,298 1099,299 1096,313 1084,325 1069,328 1114,355 1042,355 1021,370 1003,379 1012,391 1048,382 1054,412 1042,427 1024,421 1000,436
376,208 406,196 448,211 433,223 475,241 439,241 427,241 409,235 397,244 379,235 364,247 370,256 346,250 316,229 298,238 295,253 277,262 244,265 262,289 289,298 274,316 280,337 238,322 238,334 208,343 349,280 409,289 439,283 316,298 316,307 310,320 316,322 355,325 325,340 319,346 322,352 319,361 334,349 349,349 376,349 403,364 415,355 421,337 424,343 433,346 472,328 490,331 469,337 463,341 472,358 496,349 493,370 550,244 580,244 601,235 610,250 586,259 607,259 640,256 655,253 631,271 649,283 664,280 676,277 646,295 655,301 550,280 562,301 586,316 583,334 595,334 634,325 634,346 562,364 529,379 523,388 550,379 556,382 523,400 532,403 241,364 245,367 211,376 205,382 226,391 253,397 310,400 325,406 385,394 385,403 400,403 409,415 385,421 355,412 352,433 337,439 334,442 313,436 451,409 436,415 451,421 454,425 442,445 358,460 373,460 352,478 370,499 400,505 318,484 324,484 328,493 337,496 334,508 451,481 433,496 442,496 454,502 454,509 385,535 388,536 394,544 637,430 658,451`;
const parse = (s: string) => s.split(/\s+/).map(p => p.split(',').map(Number));
const Points = ({ data }: { data: string }) => (
  <>{parse(data).map(([x, y], i) => <circle key={i} cx={x} cy={y} r="8" />)}</>
);

/* ---------- table data ---------- */

const columns: { name: string; w: number; right?: boolean; headRight?: boolean }[] = [
  { name: 'OBJECTID_1 *', w: 82 }, { name: 'Shape *', w: 52 }, { name: 'Lat_ft', w: 87, right: true },
  { name: 'Lon_ft', w: 91, right: true }, { name: 'Lat_dd', w: 63, right: true }, { name: 'Lon_dd', w: 66, right: true },
  { name: 'PointID', w: 51, right: true, headRight: true }, { name: 'Dec_A', w: 56, right: true }, { name: 'Dec_B', w: 67, right: true },
  { name: 'Type_AB', w: 134 }, { name: 'Categ', w: 134 }, { name: 'Int_sm', w: 48, right: true, headRight: true },
  { name: 'Int_lrg', w: 45, right: true, headRight: true }, { name: 'New', w: 134 },
];
const rows = `1|Point|237550.397356|1004539.379999|40.818673|-73.926697|1|0.783613|5.894669|A|gamma|3|337|<Null>
2|Point|244658.484376|1003216.780874|40.838186|-73.931455|2|0.769294|-35.099885|A|gamma|2|243|<Null>
3|Point|241722.398751|1008716.928698|40.830114|-73.911589|3|0.637832|-15.994215|B|beta|3|237|<Null>
4|Point|244999.407159|1007787.059161|40.839111|-73.914937|4|0.349935|31.235553|A|gamma|5|238|<Null>
5|Point|242940.702378|1007644.858881|40.83346|-73.915458|5|0.038002|43.613554|B|delta|8|266|delta B
6|Point|245186.473045|1010322.735621|40.839617|-73.905773|6|0.494482|-4.241832|A|alpha|7|461|<Null>
7|Point|242700.387153|1008793.720278|40.832798|-73.911308|7|0.178279|16.455974|A|gamma|3|54|<Null>
8|Point|242041.076066|1008450.927662|40.830989|-73.912549|8|0.506203|-18.764075|B|delta|2|214|<Null>
9|Point|238320.701478|1003807.203576|40.820789|-73.92934|9|0.518285|37.847549|A|gamma|7|225|<Null>
10|Point|243813.800087|1009658.868087|40.835851|-73.908177|10|0.20131|-24.32369|B|beta|10|489|<Null>
11|Point|243997.165751|1004892.112599|40.836367|-73.925403|11|0.085819|-3.309071|B|gamma|2|386|<Null>
12|Point|244008.222615|1003576.872171|40.8364|-73.930156|12|0.124531|7.610938|A|gamma|3|160|<Null>
13|Point|243027.474444|1007768.39091|40.833698|-73.915012|13|0.542465|-29.763704|B|gamma|3|136|<Null>
|||||||||||||`.split('\n').map(r => r.split('|'));

/* ---------- pieces ---------- */

const Big = ({ w, icon, a, b, caret, active, off }: { w: number; icon: React.ReactNode; a: string; b?: string; caret?: boolean; active?: boolean; off?: boolean }) => (
  <LargeButton $w={w} $active={active} $off={off}>
    {icon}
    <LargeText><span>{a}</span><span>{b}{caret && <Caret c={off ? muted : '#555'} />}</span></LargeText>
  </LargeButton>
);
const Small = ({ icon, children, caret, off }: { icon: React.ReactNode; children: string; caret?: boolean; off?: boolean }) => (
  <SmallButton $off={off}>{icon}<span>{children}</span>{caret && <Caret w={5} />}</SmallButton>
);
const RibbonGroup = ({ w, pad = 4, label, launcher, children }: { w: number; pad?: number; label: string; launcher?: boolean; children: React.ReactNode }) => (
  <Group $w={w}>
    <GroupBody $pad={pad}>{children}</GroupBody>
    <GroupFoot><span>{label}</span>{launcher && <button aria-label={`${label} options`}><Launcher /></button>}</GroupFoot>
  </Group>
);

export default function App() {
  return (
    <Shell>
      <Global />
      <Header>
        <HeaderLeft>
          <TitleRow>
            <QuickAccess>
              <QuickButton aria-label="New"><NewIcon /></QuickButton>
              <QuickButton aria-label="Open"><OpenIcon /></QuickButton>
              <QuickButton aria-label="Save"><SaveIcon /></QuickButton>
              <QuickButton aria-label="Undo" $w={25}><Undo /><Caret w={5} /></QuickButton>
              <QuickButton aria-label="Redo" $w={25}><Undo flip /><Caret w={5} /></QuickButton>
              <QuickButton aria-label="Customize"><svg width="14" height="8" viewBox="0 0 14 8"><path d="M4 1h6" stroke="#444" /><path d="M4 4h6l-3 3z" fill="#444" /></svg></QuickButton>
            </QuickAccess>
            <AppTitle>QueriesSelectionsPro - Points1_Table1_join - ArcGIS Pro</AppTitle>
          </TitleRow>
          <TabRow>
            <RibbonTab $kind="project">Project</RibbonTab>
            <RibbonTab $kind="active">Map</RibbonTab>
            {['Insert', 'Analysis', 'View', 'Edit', 'Imagery', 'Share'].map(t => <RibbonTab key={t}>{t}</RibbonTab>)}
          </TabRow>
        </HeaderLeft>
        <ContextGroup $w={54} $bar="#66776a" $bg="#e0e8df"><span>Table</span><ContextTabs><RibbonTab>View</RibbonTab></ContextTabs></ContextGroup>
        <ContextGroup $w={235} $bar="#eba95c" $bg="#efe9df">
          <span>Feature Layer</span>
          <ContextTabs><RibbonTab>Appearance</RibbonTab><RibbonTab>Labeling</RibbonTab><RibbonTab>Data</RibbonTab></ContextTabs>
        </ContextGroup>
        <HeaderRight>
          <WindowControls>
            <WindowButton aria-label="Help">?</WindowButton>
            <WindowButton aria-label="Minimize"><svg width="10" height="10" viewBox="0 0 10 10"><path d="M0 5.500h10" stroke="#333" /></svg></WindowButton>
            <WindowButton aria-label="Restore"><svg width="10" height="10" viewBox="0 0 10 10"><path d="M.5 2.500h7v7h-7zM2.500 2V.5h7v7H8" fill="none" stroke="#333" /></svg></WindowButton>
            <WindowButton aria-label="Close"><Close s={10} c="#333" /></WindowButton>
          </WindowControls>
          <CommandRow>
            <CommandSearch><Lens /><input aria-label="Command search" placeholder="Command Search (Alt+Q)" /></CommandSearch>
            <UserBox />
          </CommandRow>
        </HeaderRight>
      </Header>

      <Ribbon>
        <RibbonGroup w={124} pad={0} label="Clipboard">
          <Big w={37} icon={<PasteIcon />} a="Paste" caret off />
          <Stack>
            <Small icon={<CutIcon />} off>Cut</Small>
            <Small icon={<CopyIcon />} off>Copy</Small>
            <Small icon={<CopyPathIcon />} off>Copy Path</Small>
          </Stack>
        </RibbonGroup>
        <RibbonGroup w={203} label="Navigate" launcher>
          <Big w={47} icon={<ExploreIcon />} a="Explore" caret />
          <NavGrid>
            <button aria-label="Full extent"><GlobeIcon /></button><button aria-label="Zoom to selection"><ZoomSelIcon off /></button>
            <button aria-label="Fixed zoom in"><ArrowsIcon /></button><button aria-label="Fixed zoom out"><ArrowsIcon out /></button>
            <button aria-label="Previous extent"><BackIcon c={sky} /></button><button aria-label="Next extent"><BackIcon c="#cfcfcf" flip /></button>
          </NavGrid>
          <Big w={67} icon={<BookIcon />} a="Bookmarks" caret />
          <Big w={36} icon={<GoToIcon />} a="Go" b="To XY" />
        </RibbonGroup>
        <RibbonGroup w={230} pad={5} label="Layer">
          <Big w={52} icon={<BasemapIcon />} a="Basemap" caret />
          <Big w={40} icon={<AddDataIcon />} a="Add" b="Data" caret />
          <Stack>
            <Small icon={<PresetIcon />} caret>Add Preset</Small>
            <Small icon={<GraphicsIcon />}>Add Graphics Layer</Small>
          </Stack>
        </RibbonGroup>
        <RibbonGroup w={237} label="Selection" launcher>
          <Big w={38} icon={<SelectIcon />} a="Select" caret active />
          <Big w={57} icon={<SelectAttrIcon />} a="Select By" b="Attributes" />
          <Big w={56} icon={<SelectLocIcon />} a="Select By" b="Location" />
          <Stack>
            <Small icon={<AttributesIcon />}>Attributes</Small>
            <Small icon={<PolyIcon off />} off>Clear</Small>
          </Stack>
        </RibbonGroup>
        <RibbonGroup w={241} pad={6} label="Inquiry">
          <Big w={51} icon={<MeasureIcon />} a="Measure" caret />
          <Big w={43} icon={<LocateIcon />} a="Locate" caret />
          <Big w={70} icon={<InfoIcon />} a="Infographics" caret />
          <Big w={67} icon={<CoordIcon />} a="Coordinate" b="Conversion" />
        </RibbonGroup>
        <RibbonGroup w={168} pad={6} label="Labeling" launcher>
          <Stack $w={109}>
            <SmallRow><Small icon={<PauseTag />}>Pause</Small><Small icon={<LockTag />}>Lock</Small></SmallRow>
            <Small icon={<UnplacedTag />}>View Unplaced</Small>
            <Small icon={<TagIcon />} caret>More</Small>
          </Stack>
          <Big w={48} icon={<ConvertIcon />} a="Convert" caret />
        </RibbonGroup>
        <RibbonGroup w={139} pad={4} label="Offline" launcher>
          <Big w={60} icon={<OfflineIcon />} a="Download" b="Map" caret off />
          <Stack>
            <Small icon={<SyncSmall />} off>Sync</Small>
            <Small icon={<RemoveSmall />} off>Remove</Small>
          </Stack>
        </RibbonGroup>
      </Ribbon>

      <Main>
        <ContentsPane>
          <PaneHeader><h2>Contents</h2><PaneTools><button aria-label="Menu"><Caret c={g} w={7} /></button><button aria-label="Pin"><Pin /></button><button aria-label="Close"><Close /></button></PaneTools></PaneHeader>
          <SearchRow>
            <FunnelIcon />
            <SearchBox><input aria-label="Search" placeholder="Search" /><Lens /><Caret c="#bbb" w={5} /></SearchBox>
          </SearchRow>
          <ListTabs>
            <ListTab aria-label="Drawing order" $active><OrderIcon /></ListTab>
            <ListTab aria-label="Data source"><CylinderIcon /></ListTab>
            <ListTab aria-label="Selection"><PolyIcon w={22} /></ListTab>
            <ListTab aria-label="Editing"><PencilIcon /></ListTab>
            <ListTab aria-label="Snapping"><GridPlusIcon /></ListTab>
            <ListTab aria-label="Labeling"><LabelIcon /></ListTab>
            <ListTab aria-label="Imagery"><SatelliteIcon /></ListTab>
          </ListTabs>
          <OrderTitle>Drawing Order</OrderTitle>
          <TreeRow><Twist /><MapIcon /><span>Map</span></TreeRow>
          <LayerRow><Twist /><LayerItem><Check type="checkbox" defaultChecked />Points1_Table1_join</LayerItem></LayerRow>
          <SymbolRow><svg width="6" height="6" viewBox="0 0 6 6"><circle cx="3" cy="3" r="2.400" fill="#b0207f" stroke="#222" /></svg></SymbolRow>
        </ContentsPane>

        <Center>
          <DocTabs>
            <DocTab $w={75}><MapIcon /><span>Map</span><button aria-label="Close map"><Close c="#888" /></button></DocTab>
            <Caret c="#888" w={7} />
          </DocTabs>
          <MapView>
            <svg width="397" height="390" viewBox="0 0 1191 1170" fill="#ad1f7e" stroke="#1f1f1f" strokeWidth="3">
              <Points data={north} />
              <g transform="translate(0 570)"><Points data={south} /></g>
            </svg>
            <Pointer width="26" height="22" viewBox="0 0 26 22"><path d="M.5.500v15l3.500-3 2.500 6 3-1.500L7 11.500h5z" fill="#fff" stroke="#222" /><path d="M15.500 12.500h8v4h-8z" fill="#fff" stroke="#222" /></Pointer>
          </MapView>
          <MapBar>
            <Cluster>
              <ScaleBox><select aria-label="Map scale"><option>1:57,477</option></select><Caret w={5} /></ScaleBox>
              <Rule />
              <button aria-label="Grid"><GridPlusIcon w={16} /></button><button aria-label="Snapping"><SnapIcon /></button><button aria-label="Snap grid"><GridIcon /></button><button aria-label="Inference"><CrossIcon /></button><button aria-label="North"><NorthIcon /></button>
              <Rule $start={2} />
            </Cluster>
            <Cluster><button>985,988.44E 233,200.59N ftUS<svg width="16" height="7" viewBox="2 0 16 7"><path d="M7 1l4 4 4-4" fill="none" stroke="#555" strokeWidth="2" /></svg></button></Cluster>
            <Cluster $gap={6}>
              <Rule /><SelectedBox><ZoomSelIcon />Selected Features: 0</SelectedBox><Rule />
              <button aria-label="Pause drawing"><svg width="15" height="14" viewBox="0 0 15 14"><path d="M2 0h4v14H2zM9 0h4v14H9z" fill={g} /></svg></button>
              <Rule /><button aria-label="Refresh"><RefreshIcon /></button>
            </Cluster>
          </MapBar>

          <TablePane>
            <DocTabs>
              <DocTab $w={153}><TableIcon /><span>Points1_Table1_join</span><button aria-label="Close table"><Close c="#888" /></button></DocTab>
              <Caret c="#888" w={7} />
            </DocTabs>
            <TableBody>
              <Toolbar>
                <b>Field:</b>
                <ToolButton><TableIcon mark={<path d="M5.500 8v8M2 12h7" stroke="#555" strokeWidth="2" />} />Add</ToolButton>
                <ToolButton><TableIcon mark={<><path d="M5 9h6v6H5z" fill="#fff" /><path d="M5 11h6M5 14h6" stroke="#555" strokeWidth="1.500" /></>} />Calculate</ToolButton>
                <Rule $h={22} $start={11} />
                <ToolButton as="b">Selection:</ToolButton>
                <ToolButton><SelectAttrIcon w={16} />Select By Attributes</ToolButton>
                <ToolButton $off><ZoomSelIcon />Zoom To</ToolButton>
                <ToolButton><SwitchIcon />Switch</ToolButton>
                <ToolButton $off><RowsIcon c="#c4c4c4" />Clear</ToolButton>
                <ToolButton $off><RowsIcon c="#c4c4c4" f="#f6f6f6" mark={<path d="M3 8l5 5M8 8l-5 5" stroke="#e6d28a" strokeWidth="2" />} />Delete</ToolButton>
                <ToolButton $off><svg width="16" height="16" viewBox="0 0 16 16" fill="#e5f0f8" stroke="#c4c4c4"><path d="M4.500 1.500h11v9h-11zM4.500 4.500h11" /><path d="M.5 5.500h11v9H.5zM.5 8.500h11M.5 11.500h11" /></svg>Copy</ToolButton>
                <Spring />
                <button aria-label="Menu"><svg width="15" height="14" viewBox="0 0 15 14"><path d="M0 2h15M0 7h15M0 12h15" stroke="#555" strokeWidth="3" /></svg></button>
              </Toolbar>
              <GridFrame>
                <Grid>
                  <colgroup><Col $w={25} /><Col $w={4} />{columns.map(c => <Col key={c.name} $w={c.w} />)}</colgroup>
                  <thead><tr>
                    <Corner><svg width="13" height="12" viewBox="0 0 12 12"><path d="M11 1v11H0z" fill="#c4c4c4" /></svg></Corner>
                    <Gap />
                    {columns.map((c, i) => <Head key={c.name} $selected={i === 0} $right={c.headRight}>{c.name}</Head>)}
                  </tr></thead>
                  <tbody>
                    {rows.map((r, i) => (
                      <tr key={i}>
                        <RowNumber $current={i === 3}>{r[0]}</RowNumber><Gap />
                        {r.map((v, j) => <Cell key={j} $right={columns[j].right} $even={i % 2 === 1} $current={i === 3 && j === 0}>{v}</Cell>)}
                      </tr>
                    ))}
                  </tbody>
                </Grid>
                <Scroller>
                  <svg width="8" height="7" viewBox="0 0 8 7"><path d="M4 0l4 6H0z" fill="#8a8a8a" /></svg>
                  <Track><Thumb /></Track>
                  <svg width="8" height="7" viewBox="0 0 8 7"><path d="M0 1h8L4 7z" fill="#8a8a8a" /></svg>
                </Scroller>
              </GridFrame>
              <StatusBar>
                <ViewButton $active aria-label="Show all records"><RowsIcon f="#e8f4fb" /></ViewButton>
                <ViewButton aria-label="Show selected records"><svg width="16" height="14" viewBox="0 0 16 14"><path d="M.5.5h15v9H.5zM.5 3.500h15M.5 6.500h15" fill="#c3dbed" stroke={g} /></svg></ViewButton>
                <StatusButton aria-label="First record"><svg width="11" height="10" viewBox="0 0 11 10"><path d="M1 0v10" stroke={g} strokeWidth="1.500" /><path d="M10 0v10L2.500 5z" fill={g} /></svg></StatusButton>
                <StatusButton aria-label="Last record"><svg width="11" height="10" viewBox="0 0 11 10"><path d="M10 0v10" stroke={g} strokeWidth="1.500" /><path d="M1 0v10l7.500-5z" fill={g} /></svg></StatusButton>
                <StatusButton as="span">0 of 800 selected</StatusButton>
                <Spring />
                <Cluster $gap={8} $end={4}>
                  <span>Filters:</span>
                  <button aria-label="Time filter"><svg width="16" height="16" viewBox="0 0 16 16" fill="none" stroke="#d5d8d5"><circle cx="8" cy="8" r="7" strokeWidth="1.500" /><path d="M8 3v5h4" strokeWidth="1.500" /></svg></button>
                  <button aria-label="Range filter"><svg width="16" height="16" viewBox="0 0 16 16" fill="none" stroke="#d5d8d5"><circle cx="8" cy="8" r="7" strokeWidth="1.500" /><path d="M4 1v7M8 1v8M12 1v7M6 12h6" stroke="#c9dde8" /></svg></button>
                  <button aria-label="Extent filter"><svg width="17" height="17" viewBox="0 0 17 17"><path d="M.5 1h13L8.500 8v8h-3V8z" fill="#aaa" stroke={g} /><path d="M9 9h8M9 12h8M9 15h8" stroke={sky} strokeWidth="2" strokeDasharray="2 1" /></svg></button>
                </Cluster>
                <Cluster $gap={7} $end={14}>
                  <Rule /><button aria-label="Sort"><svg width="9" height="16" viewBox="0 0 9 16" fill="none" strokeWidth="2"><path d="M4.500 8V1M1 4.500L4.500 1 8 4.500" stroke="#d0d0d0" /><path d="M4.500 8v7M1 11.500L4.500 15 8 11.500" stroke="#efe3b4" /></svg></button>
                </Cluster>
                <Symbol>-</Symbol><Slider aria-label="Zoom" type="range" defaultValue={50} /><Symbol>+</Symbol>
                <ZoomPick><select aria-label="Zoom percent"><option>100%</option></select><Caret w={5} /></ZoomPick>
                <Cluster $gap={7}><Rule /><button aria-label="Refresh table"><RefreshIcon /></button></Cluster>
              </StatusBar>
            </TableBody>
          </TablePane>
        </Center>

        <RightColumn>
          <AttributesPane>
            <PaneHeader><h2>Attributes</h2><PaneTools><button aria-label="Help">?</button><button aria-label="Menu"><Caret w={7} /></button><button aria-label="Pin"><Pin /></button><button aria-label="Close"><Close /></button></PaneTools></PaneHeader>
            <AttrTabs><AttrTab $active>Selection</AttrTab><AttrTab>Layers</AttrTab></AttrTabs>
            <Message><InfoDot /><span>Make a selection.</span><button aria-label="Dismiss"><Close c="#777" /></button></Message>
            <SelectButton><SelectIcon w={24} /><span>Select one or more features</span><Caret /></SelectButton>
            <Splitter />
          </AttributesPane>
          <DockTabs><DockTab>Catalog</DockTab><DockTab $active>Attributes</DockTab></DockTabs>
        </RightColumn>
      </Main>
    </Shell>
  );
}
